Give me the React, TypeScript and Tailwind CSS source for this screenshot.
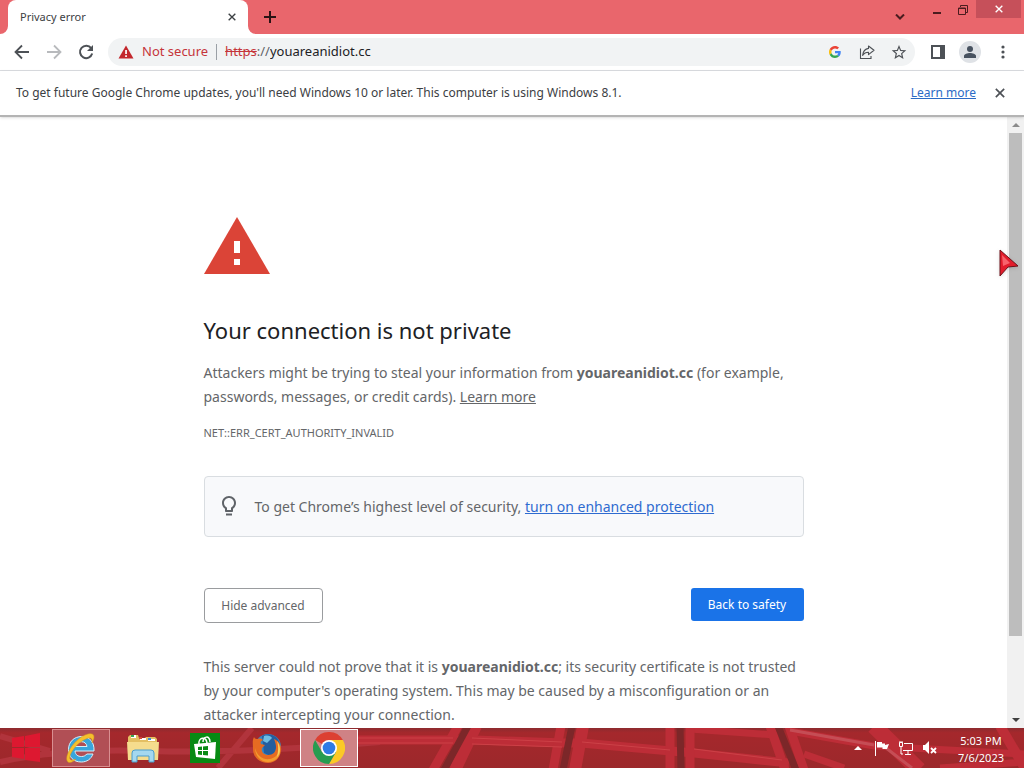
import { type ReactNode } from 'react';

interface TaskButtonProps {
  label: string;
  className?: string;
  children: ReactNode;
}

const IconBack = ({ flip = false }: { flip?: boolean }) => (
  <svg viewBox="0 0 16 16" className={flip ? 'size-4 -scale-x-100' : 'size-4'} fill="none" stroke="currentColor" strokeWidth="1.8">
    <path d="M15 8H2M8 1.5 1.5 8 8 14.5" />
  </svg>
);

const IconReload = () => (
  <svg viewBox="0 0 16 16" className="size-4" fill="none" stroke="currentColor" strokeWidth="2">
    <path d="M13.2 4.2A6.2 6.2 0 1 0 14.2 9.6" />
    <path d="M15 1v6H9z" fill="currentColor" stroke="none" />
  </svg>
);

const IconClose = ({ className }: { className: string }) => (
  <svg viewBox="0 0 12 12" className={className} fill="none" stroke="currentColor">
    <path d="M1 1l10 10M11 1L1 11" />
  </svg>
);

const IconGoogle = () => (
  <svg viewBox="0 0 48 48" className="size-3">
    <path fill="#EA4335" d="M24 9.5c3.54 0 6.71 1.22 9.21 3.6l6.85-6.85C35.9 2.38 30.47 0 24 0 14.62 0 6.51 5.38 2.56 13.22l7.98 6.19C12.43 13.72 17.74 9.5 24 9.5z" />
    <path fill="#4285F4" d="M46.98 24.55c0-1.57-.15-3.09-.38-4.55H24v9.02h12.94c-.58 2.96-2.26 5.48-4.78 7.18l7.73 6c4.51-4.18 7.09-10.36 7.09-17.65z" />
    <path fill="#FBBC05" d="M10.53 28.59c-.48-1.45-.76-2.99-.76-4.59s.27-3.14.76-4.59l-7.98-6.19C.92 16.46 0 20.12 0 24s.92 7.54 2.56 10.78l7.97-6.19z" />
    <path fill="#34A853" d="M24 48c6.48 0 11.93-2.13 15.89-5.81l-7.73-6c-2.15 1.45-4.92 2.3-8.16 2.3-6.26 0-11.57-4.22-13.47-9.91l-7.98 6.19C6.51 42.62 14.62 48 24 48z" />
  </svg>
);

const IconShare = () => (
  <svg viewBox="0 0 16 16" className="size-4" fill="none" stroke="currentColor" strokeWidth="1.1">
    <path d="M1.5 4.5v10H12V12" />
    <path d="M9.5 2 15 6.3 9.5 10.6V8.2C6.8 8.2 5 9.2 3.6 11.4 4 8 5.8 4.9 9.5 4.4z" strokeLinejoin="round" />
  </svg>
);

const IconStar = () => (
  <svg viewBox="1 1 22 21" className="size-[18px]" fill="currentColor">
    <path d="M22 9.24l-7.19-.62L12 2 9.19 8.63 2 9.24l5.46 4.73L5.82 21 12 17.27 18.18 21l-1.63-7.03L22 9.24zM12 15.4l-3.76 2.27 1-4.28-3.32-2.88 4.38-.38L12 6.1l1.71 4.04 4.38.38-3.32 2.88 1 4.28L12 15.4z" />
  </svg>
);

const IconBulb = () => (
  <svg viewBox="0 0 24 24" className="size-6 shrink-0" fill="#5f6368">
    <path d="M12 1C8.14 1 5 4.14 5 8c0 2.38 1.19 4.47 3 5.74V16c0 .55.45 1 1 1h6c.55 0 1-.45 1-1v-2.26c1.81-1.27 3-3.36 3-5.74 0-3.86-3.14-7-7-7zm2.85 11.1l-.85.6V15h-4v-2.3l-.85-.6C7.8 11.16 7 9.63 7 8c0-2.76 2.24-5 5-5s5 2.24 5 5c0 1.63-.8 3.16-2.15 4.1zM9 18.5h6v2H9z" />
  </svg>
);

// Concave corner where the tab meets the toolbar
const TabFoot = ({ flip = false }: { flip?: boolean }) => (
  <svg viewBox="0 0 8 8" className={flip ? 'size-2 -scale-x-100' : 'size-2'} fill="#fff">
    <path d="M8 0v8H0a8 8 0 0 0 8-8z" />
  </svg>
);

function TabStrip() {
  return (
    <header className="flex h-[34px] items-start bg-[#e9666c]">
      <div className="flex h-full items-end">
        <TabFoot />
        <div className="flex h-full w-[240px] items-center justify-between rounded-t-lg bg-white pl-3 pr-2">
          <span className="text-[11px] text-[#3c4043]">Privacy error</span>
          <button aria-label="Close tab" className="flex size-4 items-center justify-center text-[#3c4043]">
            <IconClose className="size-2 stroke-2" />
          </button>
        </div>
        <TabFoot flip />
      </div>
      <button aria-label="New tab" className="flex h-full w-7 items-center justify-center text-[#2b1315]">
        <svg viewBox="0 0 12 12" className="size-3" stroke="currentColor" strokeWidth="2">
          <path d="M6 0v12M0 6h12" />
        </svg>
      </button>
      <div className="ml-auto flex h-full items-start text-[#4a1c1f]">
        <button aria-label="Search tabs" className="flex h-full w-6 items-center justify-center">
          <svg viewBox="0 0 10 6" className="h-[6px] w-[10px]" fill="none" stroke="currentColor" strokeWidth="2">
            <path d="M1 .5l4 4 4-4" />
          </svg>
        </button>
        <button aria-label="Minimize" className="ml-3 flex h-[19px] w-[26px] items-center justify-center">
          <svg viewBox="0 0 8 8" className="size-2" fill="currentColor">
            <path d="M0 6h8v2H0z" />
          </svg>
        </button>
        <button aria-label="Restore" className="flex h-[19px] w-[26px] items-center justify-center">
          <svg viewBox="0 0 10 10" className="size-[10px]" fill="none" stroke="currentColor">
            <path d="M2.5 2V.5h7v7H8" />
            <path d="M.5 3h7v6.5h-7zM.5 3.5h7" />
          </svg>
        </button>
        <button aria-label="Close window" className="mr-[3px] flex h-[18px] w-[45px] items-center justify-center bg-[#c6505a] text-white">
          <IconClose className="size-2 stroke-2" />
        </button>
      </div>
    </header>
  );
}

function Toolbar() {
  return (
    <div className="flex h-[37px] items-center border-b border-[#dadce0] bg-white pl-[14px] pr-[13px] text-[#4d5156]">
      <div className="flex items-center gap-4">
        <button aria-label="Back"><IconBack /></button>
        <button aria-label="Forward" disabled className="text-[#b8babd]"><IconBack flip /></button>
        <button aria-label="Reload"><IconReload /></button>
      </div>
      <div className="ml-[14px] flex h-7 flex-1 items-center rounded-full bg-[#f1f3f4] pl-[10px] pr-2 text-[13px]">
        <button className="flex items-center gap-2 text-[#c5353a]">
          <svg viewBox="0 0 16 14" className="h-[14px] w-4">
            <path d="M8 .5l7.5 13H.5z" fill="#c3272d" />
            <path d="M7.2 5h1.7v4H7.2zM7.2 10.3h1.7V12H7.2z" fill="#fff" />
          </svg>
          Not secure
        </button>
        <span className="mx-2 h-4 w-px bg-[#9aa0a6]" />
        <label htmlFor="url" className="text-[#5f6368]">
          <s className="text-[#c5353a]">https</s>://
        </label>
        <input id="url" defaultValue="youareanidiot.cc" className="min-w-0 flex-1 bg-transparent text-[#202124] outline-none" />
        <div className="flex items-center gap-4">
          <button aria-label="Search with Google" className="flex size-4 items-center justify-center"><IconGoogle /></button>
          <button aria-label="Share"><IconShare /></button>
          <button aria-label="Bookmark" className="flex size-4 items-center justify-center"><IconStar /></button>
        </div>
      </div>
      <div className="ml-4 flex items-center gap-[14px]">
        <button aria-label="Side panel">
          <svg viewBox="0 0 14 14" className="size-[14px]">
            <path d="M1 1h12v12H1z" fill="#fff" stroke="currentColor" strokeWidth="2" />
            <path d="M9 1h5v12H9z" fill="currentColor" />
          </svg>
        </button>
        <button aria-label="Profile" className="flex size-[22px] items-center justify-center rounded-full bg-[#dfe2e6]">
          <svg viewBox="0 0 12 12" className="size-3" fill="#485260">
            <circle cx="6" cy="3" r="3" />
            <path d="M0 12v-2c0-2 3.5-3 6-3s6 1 6 3v2z" />
          </svg>
        </button>
        <button aria-label="Menu" className="flex w-4 justify-center">
          <svg viewBox="0 0 4 14" className="h-[14px] w-1" fill="currentColor">
            <circle cx="2" cy="2" r="1.6" />
            <circle cx="2" cy="7" r="1.6" />
            <circle cx="2" cy="12" r="1.6" />
          </svg>
        </button>
      </div>
    </div>
  );
}

function UpdateBar() {
  return (
    <div className="z-10 flex h-[46px] items-center border-b-2 border-[#b4b4b4] bg-white pl-4 pr-[19px] text-[12px] text-[#3c4043] shadow-sm">
      <p>To get future Google Chrome updates, you'll need Windows 10 or later. This computer is using Windows 8.1.</p>
      <a href="#update" className="ml-auto text-[#2b6bc6] underline">Learn more</a>
      <button aria-label="Dismiss" className="ml-[19px] text-[#4d5156]">
        <IconClose className="size-[10px] stroke-2" />
      </button>
    </div>
  );
}

function Interstitial() {
  return (
    <main className="min-w-0 flex-1 overflow-hidden bg-white text-[14px] leading-6 text-[#646669]">
      <div className="mx-auto w-full max-w-[600px] pt-[100px]">
        <svg viewBox="0 0 66 57" className="h-[57px] w-[66px]">
          <path d="M33 0l33 57H0z" fill="#db4437" />
          <path d="M30 24h6v12h-6zM30 42h6v6h-6z" fill="#fff" />
        </svg>
        <h1 className="mt-10 text-[22px] leading-8 text-[#202124]">Your connection is not private</h1>
        <p className="mt-[15px]">
          Attackers might be trying to steal your information from <strong>youareanidiot.cc</strong> (for example,
          passwords, messages, or credit cards). <a href="#learn" className="underline">Learn more</a>
        </p>
        <p className="mt-3 text-[11px]">NET::ERR_CERT_AUTHORITY_INVALID</p>
        <div className="mt-[31px] flex h-[61px] items-center gap-[14px] rounded border border-[#d9dde1] bg-[#f8f9fb] px-3">
          <IconBulb />
          <p>
            To get Chrome’s highest level of security,{' '}
            <a href="#enhanced" className="text-[#2f6bd0] underline">turn on enhanced protection</a>
          </p>
        </div>
        <div className="mt-[51px] flex items-start justify-between text-[12px]">
          <button className="h-[35px] w-[119px] rounded border border-[#9a9c9f]">Hide advanced</button>
          <button className="h-[33px] w-[113px] rounded-[3px] bg-[#1a73e8] text-white">Back to safety</button>
        </div>
        <p className="mt-8">
          This server could not prove that it is <strong>youareanidiot.cc</strong>; its security certificate is not trusted
          by your computer's operating system. This may be caused by a misconfiguration or an attacker intercepting your
          connection.
        </p>
      </div>
    </main>
  );
}

function ScrollBar() {
  return (
    <div className="flex w-[17px] flex-col bg-[#f1f1f1] px-[2px]">
      <button aria-label="Scroll up" className="flex h-4 items-center justify-center">
        <svg viewBox="0 0 8 4" className="h-1 w-2" fill="#8b8b8b"><path d="M4 0l4 4H0z" /></svg>
      </button>
      <div className="flex-1">
        <div className="h-[87%] bg-[#bdbdbd]" />
      </div>
      <button aria-label="Scroll down" className="flex h-[17px] items-center justify-center">
        <svg viewBox="0 0 8 4" className="h-1 w-2" fill="#404040"><path d="M0 0h8L4 4z" /></svg>
      </button>
    </div>
  );
}

const TaskButton = ({ label, className = '', children }: TaskButtonProps) => (
  <button aria-label={label} className={`flex h-[38px] w-[58px] items-center justify-center ${className}`}>
    {children}
  </button>
);

// Red girder wallpaper seen through the glass taskbar
const Wallpaper = () => (
  <svg viewBox="0 0 1024 40" preserveAspectRatio="none" className="absolute inset-0 size-full">
    <defs>
      <linearGradient id="glass" x1="0" y1="0" x2="0" y2="1">
        <stop offset="0" stopColor="#8d2b2f" />
        <stop offset=".12" stopColor="#a5282c" />
        <stop offset="1" stopColor="#9c282b" />
      </linearGradient>
    </defs>
    <path fill="url(#glass)" d="M0 0h1024v40H0z" />
    <g fill="none" stroke="#b1343c" strokeWidth="6">
      <path d="M0 8l50 15M0 34q60-14 150-11t230-9M218 40l34-40" />
    </g>
    <g fill="none" stroke="#bd2d37">
      <path d="M358 12h95l22 0 90 3 16 0 90 8 23 2 95 10" strokeWidth="9" />
      <path d="M690 1l85 6M790 3l84 15 150 8M804 26l40 14M940 40l84-6" strokeWidth="7" />
      <path d="M433 42L458-2M553 42l8-44M670 42V-2M690 42V-2M785 42L770-2M804 42L789-2" strokeWidth="9" />
      <path d="M455 42L476-2M575 42l8-44" strokeWidth="12" />
      <path d="M874-2l45 44" strokeWidth="16" />
      <path d="M1000-2l26 44" strokeWidth="10" />
    </g>
    <path d="M444 42L468-2M563 42l9-44M681 42l-1-44M796 42L778-2" fill="none" stroke="#7c2729" strokeWidth="7" />
    <path d="M358 10h95M472 10l90 4M582 14l88 8M694 21l88 11M358 15h95M472 16l90 3" fill="none" stroke="#cc4147" />
    <path d="M790 2l84 15M886 20l26 20" fill="none" stroke="#c95b62" strokeWidth="3" opacity=".7" />
  </svg>
);

function Taskbar() {
  return (
    <footer className="relative h-10 overflow-hidden">
      <Wallpaper />
      <div className="relative flex h-full items-center text-white">
        <button aria-label="Start" className="flex h-full w-[52px] items-center justify-center">
          <svg viewBox="0 0 30 30" className="size-[30px]" fill="#dd1830">
            <path d="M1 5l12-2v11H1zM14 3l15-3v14H14zM1 15h12v11L1 24zM14 15h15v14l-15-2z" />
          </svg>
        </button>
        <TaskButton label="Internet Explorer" className="border border-[#d98f91] bg-[#b14f55]">
          <svg viewBox="0 0 34 34" className="size-[34px]">
            <path d="M30 20H11c.4 4 3 5.5 6.5 5.5 2.5 0 4-.9 5.3-2.5H29c-1.8 5-6 8-11.700 8C9.5 31 4.5 26 4.5 18.5S10 5.5 17.7 5.5C25.5 5.5 30.5 11 30 20zM11 15.5h12c-.5-3.2-2.7-4.8-5.7-4.8-3.2 0-5.5 1.7-6.3 4.8z" fill="#39a5dc" stroke="#d6f1fb" />
            <path d="M4 31C-1 27 9 9 21 4c5-2 9-2 9 2 0 2-1 4-2 6 .5-4-.5-6-5-4.5C13 11 4 24 6 28c.8 2 4 1 6 0-3 3-6 4.5-8 3z" fill="#f5c02c" stroke="#d2941c" strokeWidth=".5" />
          </svg>
        </TaskButton>
        <TaskButton label="File Explorer" className="ml-1">
          <svg viewBox="0 0 34 30" className="h-[30px] w-[34px]">
            <path d="M2 4l2-2h8l1 3h6l1-1h9l2 2v21H2z" fill="#e4bf62" />
            <path d="M5 2h5v3H5zM14 5h6v2h-6zM22 6h7v2h-7z" fill="#fff" />
            <path d="M5 2h3v2H5z" fill="#37a450" />
            <path d="M13 4h3v2h-3z" fill="#d34a39" />
            <path d="M22 5h3v2h-3z" fill="#3a8fd0" />
            <path d="M1 9h32l-1 18H2z" fill="#f5dc8d" />
            <path d="M6 29V20q0-3 3-3h16q3 0 3 3v9h-5v-6H11v6z" fill="#a4d8ef" stroke="#4b9dcc" />
          </svg>
        </TaskButton>
        <TaskButton label="Store" className="ml-1">
          <svg viewBox="0 0 30 30" className="size-[30px]">
            <path d="M0 0h30v30H0z" fill="#078a13" />
            <path d="M4 11l22-2-1 17-19-2z" fill="#fff" />
            <path d="M9 11c-1-6 7-9 8-1M13 9c0-6 7-7 7 0" fill="none" stroke="#fff" strokeWidth="1.5" />
            <path d="M8 14l4-.5V17H8zM13 13.4l5-.5V17h-5zM8 18h4v4l-4-.5zM13 18h5v4.5l-5-.4z" fill="#078a13" />
          </svg>
        </TaskButton>
        <TaskButton label="Firefox" className="ml-1">
          <svg viewBox="0 0 30 30" className="size-[30px]">
            <circle cx="16" cy="14" r="13" fill="#3687c4" />
            <path d="M10 3q7-4 14 1 4 4 4 11l-7 9-9-4z" fill="#245e9f" />
            <path d="M12 3c4-1 7 0 8 2l-5 5-4-2z" fill="#6fbde2" />
            <path d="M2 4c1 2 2 2 4 2 2-1 4 0 5 1-2 1-3 2-2 4l4 1-3 3c-1 4 2 7 6 7 5 0 8-3 8-8 0-3-1-5-2-8 5 2 8 7 7 12-1 7-6 12-13 12C7 30 1 24 1 16 1 11 0 8 2 4z" fill="#e66b22" />
            <path d="M3 15c2 8 8 12 15 11 5-1 8-4 10-10 1 8-5 13-12 13S3 23 3 15z" fill="#f49b2f" />
            <path d="M25 8c4 5 4 12 0 16 1-5 2-9 0-16z" fill="#fad15a" />
          </svg>
        </TaskButton>
        <TaskButton label="Google Chrome" className="ml-1 border border-white bg-[#cf8285]">
          <svg viewBox="0 0 32 32" className="size-8">
            <path d="M16 16L2.14 8a16 16 0 0 1 27.72 0z" fill="#dc4032" />
            <path d="M16 8h13.86A16 16 0 0 1 16 32l7-12z" fill="#fbc926" />
            <path d="M9 20L2.14 8A16 16 0 0 0 16 32l7-12z" fill="#269c50" />
            <circle cx="16" cy="16" r="8" fill="#fff" />
            <circle cx="16" cy="16" r="6.3" fill="#2f7be5" />
          </svg>
        </TaskButton>
        <div className="ml-auto flex items-center">
          <button aria-label="Show hidden icons" className="mr-3">
            <svg viewBox="0 0 8 4" className="h-1 w-2" fill="#fff"><path d="M4 0l4 4H0z" /></svg>
          </button>
          <button aria-label="Action Center" className="mr-2">
            <svg viewBox="0 0 16 16" className="size-4">
              <path d="M1.5 1v15" stroke="#fff" />
              <path d="M3 2h5v1.5h3V5l4-1-2 5H8.5V7.5H3z" fill="#fff" />
            </svg>
          </button>
          <button aria-label="Network" className="mr-2">
            <svg viewBox="0 0 16 16" className="size-4" fill="none" stroke="#fff">
              <path d="M6 3.5h8.5v7H5M10 11v3M7 14.5h6M1.5 2.5h3v4h-3zM3 6.5V14h2" />
              <path d="M2 1v2M4 1v2" />
            </svg>
          </button>
          <button aria-label="Volume muted" className="mr-3">
            <svg viewBox="0 0 16 16" className="size-4">
              <path d="M1 5h2l4-4v13l-4-4H1z" fill="#fff" />
              <path d="M9 8l5 5M14 8l-5 5" stroke="#fff" strokeWidth="1.8" />
            </svg>
          </button>
          <div className="w-[62px] pt-[2px] text-center text-[11px] leading-[17px]">
            <p>5:03 PM</p>
            <p>7/6/2023</p>
          </div>
          <span className="w-3" />
        </div>
      </div>
    </footer>
  );
}

export default function App() {
  return (
    <div className="relative flex h-screen flex-col overflow-hidden bg-white font-['Noto_Sans','Open_Sans',sans-serif]">
      <TabStrip />
      <Toolbar />
      <UpdateBar />
      <div className="flex min-h-0 flex-1">
        <Interstitial />
        <ScrollBar />
      </div>
      <Taskbar />
      {/* mouse pointer */}
      <svg viewBox="0 0 22 32" className="pointer-events-none absolute right-[4px] top-[247px] h-8 w-[22px] drop-shadow">
        <path d="M2 3l18 16-10 1-8 9z" fill="#e21d2c" stroke="#6d1118" strokeLinejoin="round" />
        <path d="M4 8l8 8-7 3z" fill="#f7636c" />
      </svg>
    </div>
  );
}
